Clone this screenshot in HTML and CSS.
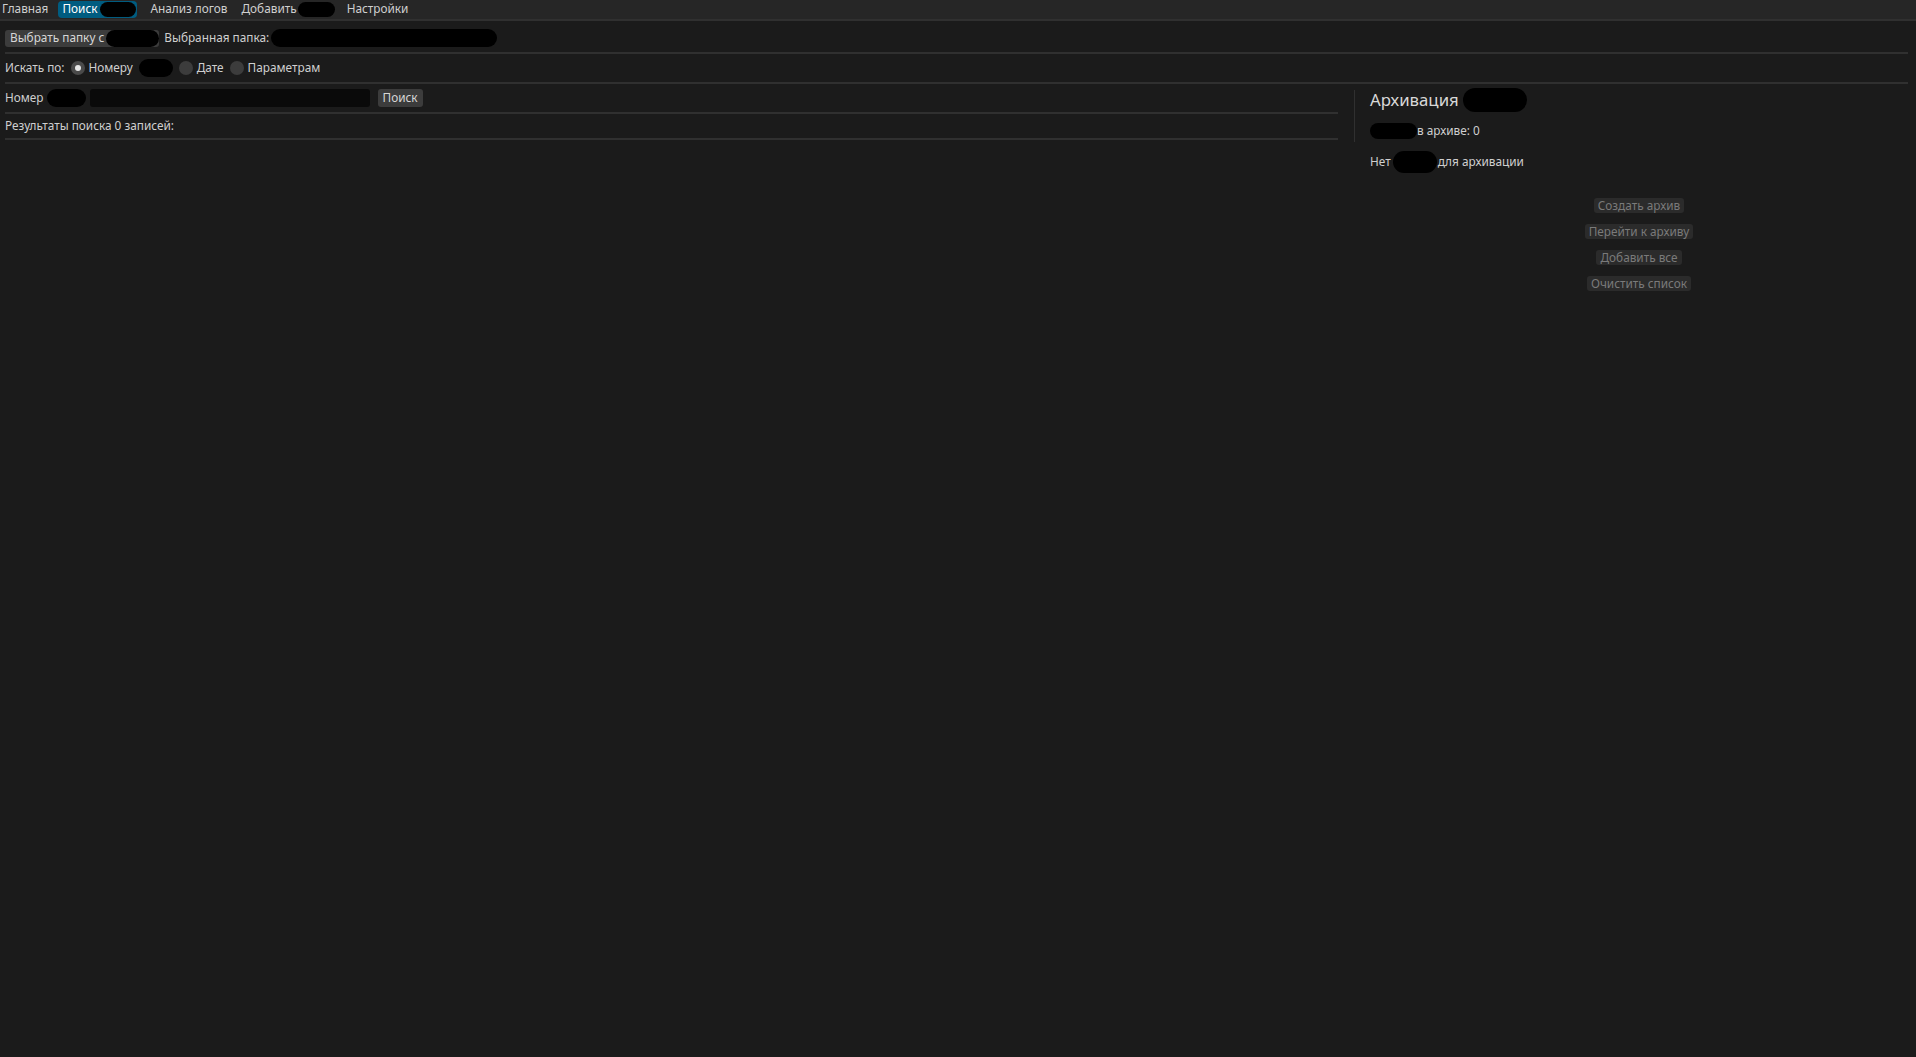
FILE: index.html
```html
<!DOCTYPE html>
<html lang="ru">
<head>
<meta charset="utf-8">
<title>Поиск</title>
<link rel="stylesheet" href="styles.css">
</head>
<body>
<nav class="menubar">
  <span class="tab">Главная</span>
  <span class="tab active">Поиск<span class="mask m-tab"></span></span>
  <span class="tab">Анализ логов</span>
  <span class="tab">Добавить<span class="mask m-add"></span></span>
  <span class="tab">Настройки</span>
</nav>

<main class="content">
  <div class="row folder-row">
    <button class="btn">Выбрать папку с<span class="mask m-folder-btn"></span></button>
    <span class="label-gap">Выбранная папка:</span><span class="mask m-path"></span>
  </div>
  <div class="sep"></div>

  <div class="row mode-row">
    <span>Искать по:</span>
    <label class="radio"><span class="dot checked"></span>Номеру<span class="mask m-mode"></span></label>
    <label class="radio"><span class="dot"></span>Дате</label>
    <label class="radio"><span class="dot"></span>Параметрам</label>
  </div>
  <div class="sep"></div>

  <div class="split">
    <section class="left">
      <div class="row query-row">
        <span>Номер</span><span class="mask m-query"></span>
        <span class="input"></span>
        <button class="btn">Поиск</button>
      </div>
      <div class="sep"></div>
      <div class="row results-row">Результаты поиска 0 записей:</div>
      <div class="sep"></div>
    </section>

    <div class="vline"></div>

    <aside class="right">
      <h2 class="title">Архивация<span class="mask m-title"></span></h2>
      <p class="stat"><span class="mask m-stat"></span>в архиве: 0</p>
      <p class="empty">Нет<span class="mask m-empty"></span>для архивации</p>
      <div class="actions">
        <button class="btn off">Создать архив</button>
        <button class="btn off">Перейти к архиву</button>
        <button class="btn off">Добавить все</button>
        <button class="btn off">Очистить список</button>
      </div>
    </aside>
  </div>
</main>
</body>
</html>
```

FILE: styles.css
```css
* { box-sizing: border-box; }

html, body {
  margin: 0;
  height: 100%;
}

body {
  background: #1b1b1b;
  color: #cfcfcf;
  font-family: "Noto Sans", "Open Sans", sans-serif;
  font-size: 11.8px;
  line-height: 1;
}

/* top menu */
.menubar {
  display: flex;
  align-items: center;
  gap: 6px;
  height: 21px;
  padding: 1px 0 2px;
  margin-left: -2px;
  background: #262626;
  border-bottom: 2px solid #303030;
}

.tab {
  display: flex;
  align-items: center;
  height: 17px;
  padding: 0 4px;
  border-radius: 4px;
  color: #cfcfcf;
  white-space: nowrap;
}

.tab.active {
  background: #005c80;
  color: #ffffff;
  padding-right: 1px;
}
.tab.active + .tab { margin-left: 3px; }

/* black blots that hide words */
.mask {
  display: inline-block;
  background: #000;
  border-radius: 9px;
  height: 15px;
  vertical-align: middle;
  flex: none;
}
.m-tab { width: 36px; margin-left: 3px; }
.m-add { width: 37px; margin-left: 1px; margin-right: -2px; border-radius: 8px; }
.m-folder-btn { width: 53px; height: 17px; margin-left: 2px; margin-right: -5px; }
.m-path { width: 226px; height: 18px; margin-left: 2px; }
.m-mode { width: 34px; height: 18px; margin-left: 2px; }
.m-query { width: 39px; height: 18px; margin-left: 3px; }
.m-title { width: 64px; height: 24px; margin-left: 4px; border-radius: 12px; }
.m-stat { width: 47px; height: 16px; margin-right: 0; }
.m-empty { width: 44px; height: 22px; margin: 0 1px 0 2px; border-radius: 11px; }

/* main area */
.content {
  padding: 0 8px 0 5px;
}

.row {
  display: flex;
  align-items: center;
  white-space: nowrap;
}

.sep {
  height: 2px;
  background: #303030;
}

.folder-row {
  height: 31px;
  padding-top: 3px;
}

.label-gap { margin-left: 5px; }

.btn {
  font: inherit;
  display: inline-flex;
  align-items: center;
  height: 17px;
  padding: 0 5px;
  border: 0;
  border-radius: 3px;
  background: #3c3c3c;
  color: #d6d6d6;
  white-space: nowrap;
}

.mode-row {
  height: 28px;
  gap: 6px;
}

.radio {
  display: flex;
  align-items: center;
  gap: 4px;
}

.dot {
  width: 14px;
  height: 14px;
  border-radius: 50%;
  background: #3c3c3c;
  position: relative;
}
.dot.checked { background: #4a4a4a; }
.dot.checked::after {
  content: "";
  position: absolute;
  left: 4px;
  top: 4px;
  width: 6px;
  height: 6px;
  border-radius: 50%;
  background: #e6e6e6;
}

/* left column + right panel */
.split {
  display: flex;
  align-items: flex-start;
}

.left {
  width: 1333px;
  flex: none;
}

.query-row {
  height: 28px;
}

.input {
  width: 280px;
  height: 18px;
  margin-left: 4px;
  background: #0a0a0a;
  border-radius: 3px;
}
.query-row .btn { margin-left: 8px; height: 18px; }

.results-row {
  height: 24px;
}

.vline {
  width: 1px;
  height: 52px;
  margin: 6px 15px 0 16px;
  background: #303030;
  flex: none;
}

.right {
  flex: 1;
  padding-top: 4px;
}

.title {
  display: flex;
  align-items: center;
  margin: 0;
  height: 24px;
  font-size: 16.8px;
  font-weight: 400;
  color: #d8d8d8;
}

.stat, .empty {
  display: flex;
  align-items: center;
  margin: 0;
}
.stat { height: 16px; margin-top: 11px; }
.empty { height: 22px; margin-top: 12px; }

.actions {
  display: flex;
  flex-direction: column;
  align-items: center;
  gap: 11px;
  margin-top: 25px;
}

.btn.off {
  height: 15px;
  background: #2b2b2b;
  color: #7a7a7a;
  padding: 0 4px;
}
```
